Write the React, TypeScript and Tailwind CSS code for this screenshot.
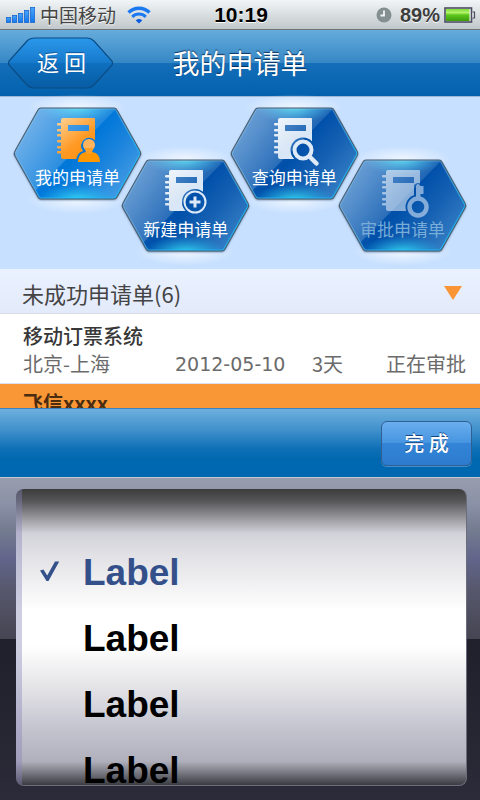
import { useState } from "react";
import type { ReactNode } from "react";

type HexTone = "bright" | "deep";

const HEX = "M29 1H101Q103 1 104 3L127 44Q128.500 46.500 127 49L104 90Q103 92 101 92H28Q26 92 25 90L2 49Q.5 46.500 2 44L25 3Q26 1 28 1Z";

function Notebook({ id, children }: { id: string; children?: ReactNode }) {
  return (
    <>
      <g fill={`url(#${id}-ink)`} mask={`url(#${id}-mask)`}>
        <path
          fillRule="evenodd"
          d="M50 11H81Q82 11 82 12V51Q82 52 81 52H50Q48 52 48 50V13Q48 11 50 11ZM55 18V24H76V18Z"
        />
        {[17, 23, 28, 34, 40, 45].map((y) => (
          <rect key={y} x="44" y={y - 1} width="6" height="2.400" rx="1" />
        ))}
      </g>
      {children}
    </>
  );
}

function HexButton({
  id,
  label,
  tone,
  low,
  faded,
  orange,
  cut,
  children,
}: {
  id: string;
  label: string;
  tone: HexTone;
  low?: boolean;
  faded?: boolean;
  orange?: boolean;
  cut: ReactNode;
  children: ReactNode;
}) {
  return (
    <button
      type="button"
      disabled={faded}
      className={`-mr-[21px] grid w-[129px] shrink-0 last:mr-0 ${low ? "mt-[52px]" : ""}`}
    >
      <svg
        viewBox="0 0 129 93"
        className="col-start-1 row-start-1 h-[93px] w-[129px] overflow-visible"
        aria-hidden="true"
      >
        <defs>
          <linearGradient id={`${id}-base`} x1="0" y1="0.2" x2="1" y2="0.8">
            <stop offset="0" stopColor={tone === "bright" ? "#2b8be0" : "#1f6fc0"} />
            <stop offset="0.5" stopColor={tone === "bright" ? "#0077d9" : "#0050aa"} />
            <stop offset="0.7" stopColor={tone === "bright" ? "#1a83dc" : "#1560b2"} />
            <stop offset="1" stopColor={tone === "bright" ? "#4a9fe6" : "#3a83c8"} />
          </linearGradient>
          <radialGradient id={`${id}-glow`}>
            <stop offset="0" stopColor="#38e6f5" stopOpacity="0.85" />
            <stop offset="1" stopColor="#20b8f0" stopOpacity="0" />
          </radialGradient>
          <radialGradient id={`${id}-halo`}>
            <stop offset="0" stopColor="#ffffff" stopOpacity="0.7" />
            <stop offset="1" stopColor="#ffffff" stopOpacity="0" />
          </radialGradient>
          <linearGradient id={`${id}-gloss`} x1="0" y1="0.3" x2="0.7" y2="0.7">
            <stop offset="0" stopColor="#ffffff" stopOpacity="0.36" />
            <stop offset="1" stopColor="#ffffff" stopOpacity="0.08" />
          </linearGradient>
          <linearGradient id={`${id}-edge`} x1="0" y1="0" x2="1" y2="1">
            <stop offset="0.4" stopColor="#8cc8f0" stopOpacity="0.4" />
            <stop offset="0.7" stopColor="#18c0ff" stopOpacity="0.8" />
          </linearGradient>
          <linearGradient id={`${id}-ink`} gradientUnits="userSpaceOnUse" x1="48" y1="11" x2="84" y2="56">
            <stop offset="0" stopColor={orange ? "#ffd091" : "#eef5fc"} />
            <stop offset="0.5" stopColor={orange ? "#ff9a26" : "#d9e6f5"} />
            <stop offset="1" stopColor={orange ? "#ff8a00" : "#dce9f8"} />
          </linearGradient>
          <clipPath id={`${id}-clip`}>
            <path d={HEX} />
          </clipPath>
          <mask id={`${id}-mask`} maskUnits="userSpaceOnUse" x="0" y="0" width="129" height="93">
            <rect width="129" height="93" fill="white" />
            {cut}
          </mask>
        </defs>
        <ellipse cx="64" cy="0" rx="50" ry="13" fill={`url(#${id}-halo)`} />
        <ellipse cx="64" cy="93" rx="50" ry="14" fill={`url(#${id}-halo)`} />
        <path d={HEX} fill={`url(#${id}-base)`} className="drop-shadow-[0_1px_1px_rgba(20,50,90,0.6)]" />
        <g clipPath={`url(#${id}-clip)`}>
          <ellipse cx="64" cy="0" rx="40" ry="16" fill={`url(#${id}-glow)`} />
          <ellipse cx="64" cy="93" rx="42" ry="16" fill={`url(#${id}-glow)`} />
          <path d="M0 0H105L20 86L0 60Z" fill={`url(#${id}-gloss)`} />
          <path d={HEX} fill="none" stroke={`url(#${id}-edge)`} strokeWidth="3.200" />
        </g>
        <path d={HEX} fill="none" stroke="#4a5f70" strokeWidth="1.100" />
        <g opacity={faded ? 0.62 : 1}>
          <Notebook id={id}>{children}</Notebook>
        </g>
      </svg>
      <span
        className={`z-10 col-start-1 row-start-1 self-end pb-[11px] text-center text-[17px] leading-6 ${
          faded ? "text-[#79add9]" : "text-white"
        }`}
      >
        {label}
      </span>
    </button>
  );
}

function StatusBar() {
  return (
    <div className="grid h-[30px] shrink-0 grid-cols-[1fr_auto_1fr] items-center border-b border-[#6d7478] bg-linear-to-b from-[#f1f5f7] to-[#c1c8cb] pr-1 pl-[6px]">
      <div className="flex items-center gap-[5px]">
        <svg viewBox="0 0 29 16" className="h-4 w-[29px]" aria-hidden="true">
          <defs>
            <linearGradient id="signal" x1="0" y1="0" x2="0" y2="1">
              <stop offset="0" stopColor="#4aa5f8" />
              <stop offset="1" stopColor="#1176ee" />
            </linearGradient>
          </defs>
          {[5, 7, 9, 12, 15].map((h, i) => (
            <rect
              key={h}
              x={i * 6 + 0.5}
              y={15.500 - h}
              width="4.200"
              height={h}
              fill="url(#signal)"
              stroke="#1766cf"
              strokeWidth="0.8"
            />
          ))}
        </svg>
        <span className="text-[19px] leading-7 text-[#444] [text-shadow:0_1px_0_#fff]">中国移动</span>
        <svg viewBox="0 0 24 18" className="ml-[6px] h-[18px] w-6" fill="none" stroke="#1a78f0" aria-hidden="true">
          <path d="M1.500 6.500A15 15 0 0 1 22.500 6.500" strokeWidth="3.400" />
          <path d="M5.200 10.800A9.800 9.800 0 0 1 18.800 10.800" strokeWidth="3" />
          <path d="M12 17.500L8.800 14.400A4.800 4.800 0 0 1 15.200 14.400Z" fill="#0a5be0" stroke="none" />
        </svg>
      </div>
      <span className="font-['Liberation_Sans',sans-serif] text-[21px] leading-7 font-bold text-black [text-shadow:0_1px_0_#fff]">
        10:19
      </span>
      <div className="flex items-center justify-end">
        <svg viewBox="0 0 16 16" className="h-4 w-4" aria-hidden="true">
          <circle cx="8" cy="8" r="7.500" fill="#858f91" />
          <path d="M8 3.500V8.500H4.500" fill="none" stroke="#f2f5f6" strokeWidth="1.800" />
        </svg>
        <span className="ml-2 font-['Liberation_Sans',sans-serif] text-[20px] leading-7 font-bold text-[#3d3d3d] [text-shadow:0_1px_0_#fff]">
          89%
        </span>
        <svg viewBox="0 0 32 16" className="ml-1 h-4 w-8" aria-hidden="true">
          <defs>
            <linearGradient id="charge" x1="0" y1="0" x2="0" y2="1">
              <stop offset="0" stopColor="#7fdc35" />
              <stop offset="0.3" stopColor="#b4f36c" />
              <stop offset="0.5" stopColor="#5cc71c" />
              <stop offset="1" stopColor="#3f9c0c" />
            </linearGradient>
          </defs>
          <rect x="1" y="1" width="26.500" height="14" fill="#f4f7f4" stroke="#4b4c60" strokeWidth="1.600" />
          <rect x="2" y="2" width="23.500" height="12" fill="url(#charge)" />
          <path d="M28.500 5H30.500V11H28.500" fill="#dfe3e6" stroke="#4b4c60" strokeWidth="1.200" />
        </svg>
      </div>
    </div>
  );
}

function Header() {
  return (
    <header className="grid h-[67px] shrink-0 grid-cols-[1fr_auto_1fr] items-center border-b border-[#9fb6d3] bg-[linear-gradient(#66acdc,#3587c5_50%,#156eb8_50%,#0261ae)] px-2 text-white">
      <button type="button" className="grid w-[105px] place-items-center">
        <svg viewBox="0 0 105 52" className="col-start-1 row-start-1 h-[52px] w-[105px]" aria-hidden="true">
          <defs>
            <linearGradient id="back" x1="0" y1="0" x2="0" y2="1">
              <stop offset="0" stopColor="#2b98eb" />
              <stop offset="0.5" stopColor="#1679cb" />
              <stop offset="0.5" stopColor="#0f70c0" />
              <stop offset="1" stopColor="#075ca3" />
            </linearGradient>
          </defs>
          <path
            d="M27 1H79Q83 1 86 4L104 24Q105 26 104 28L86 48Q83 51 79 51H27Q22 51 19 48L1 28Q0 26 1 24L19 4Q22 1 27 1Z"
            fill="url(#back)"
            stroke="#0c4c84"
            strokeWidth="1.200"
          />
        </svg>
        <span className="z-10 col-start-1 row-start-1 pb-1 pl-[2px] text-[22px] leading-8 [text-shadow:0_-1px_0_rgba(0,40,90,0.5)]">
          返 回
        </span>
      </button>
      <h1 className="text-[27px] leading-9 [text-shadow:0_-1px_1px_rgba(0,30,70,0.8)]">我的申请单</h1>
    </header>
  );
}

function Picker() {
  const [selected, setSelected] = useState(0);
  return (
    <section aria-label="选择" className="shrink-0">
      <div className="flex h-[69px] items-center justify-end border-t border-[#3b82bf] bg-[linear-gradient(#6db0de,#3a8cc9_35%,#0f70b7_58%,#0068b0_75%,#0068b0)] px-2">
        <button
          type="button"
          className="h-[45px] w-[91px] rounded-md border border-[#315f92] bg-[linear-gradient(#6aafee,#4593e0_50%,#3384d6_50%,#2c7bcf)] text-[20px] font-medium text-white shadow-[0_1px_0_rgba(110,170,220,0.6)] [text-shadow:0_-1px_0_rgba(0,30,80,0.7)]"
        >
          完 成
        </button>
      </div>
      <div className="border-t border-[#c3c8d2] bg-[linear-gradient(#989dae,#8b91a6_8%,#727a90_17%,#62658a_25%,#55566a_36%,#454552_50%,#1f202c_50%,#242430_70%,#2b2b39)] px-[13px] pt-[11px] pb-[14px] pl-4">
        <div className="h-[297px] overflow-hidden rounded-lg border-r border-b border-[#6b6c7c] bg-[linear-gradient(#3c3c3c,#555557_4%,#9a9a9f_10%,#d2d2da_15%,#e4e4e8_24%,#fff_41%,#fff_53%,#e6e6e9_66%,#c6c6d1_80%,#b0b0bd_92%,#85858e_95%,#3b3b42)]">
          <div className="h-full border-l-[6px] border-[#8585b8]/40 pt-[51px]">
            {["Label", "Label", "Label", "Label"].map((text, i) => (
              <label
                key={i}
                className={`flex h-[66px] items-center pl-[18px] font-['Liberation_Sans',sans-serif] text-[37px] font-bold ${
                  selected === i ? "text-[#34508a]" : "text-black"
                }`}
              >
                <input
                  type="radio"
                  name="picker"
                  checked={selected === i}
                  onChange={() => setSelected(i)}
                  className="sr-only"
                />
                <span className="w-[43px]">
                  {selected === i && (
                    <svg viewBox="0 0 20 20" className="mb-1 h-5 w-5" aria-hidden="true">
                      <path d="M0 9.500L3.500 8.500L7.200 14.500L15 0.500H19.200L8.500 20H6.500Z" fill="currentColor" />
                    </svg>
                  )}
                </span>
                {text}
              </label>
            ))}
          </div>
        </div>
      </div>
    </section>
  );
}

export default function App() {
  return (
    <div className="flex h-screen flex-col overflow-hidden bg-white font-['Noto_Sans_CJK_SC',sans-serif]">
      <StatusBar />
      <Header />
      <nav className="flex shrink-0 items-start justify-between bg-[#c7e0ff] px-[13px] pt-[10px] pb-[17px]">
        <HexButton
          id="mine"
          label="我的申请单"
          tone="bright"
          orange
          cut={<path d="M63 56Q63 46 70 44A8 8 0 1 1 82 44Q89 46 89 56Z" fill="black" />}
        >
          <circle cx="76" cy="38" r="6" fill="#ffb45c" />
          <path d="M65 55Q65 46 73 45Q76 48 79 45Q87 46 87 55Z" fill="#ff9800" />
          <path d="M72 41H80L79 46Q76 48 73 46Z" fill="#ff9f26" />
        </HexButton>
        <HexButton
          id="new"
          label="新建申请单"
          tone="deep"
          low
          cut={<circle cx="74" cy="43" r="13" fill="black" />}
        >
          <g fill="none" stroke="#dfeaf8">
            <circle cx="74" cy="43" r="10.500" strokeWidth="2" />
            <path d="M74 37.500V48.500M68.500 43H79.500" strokeWidth="3" />
          </g>
        </HexButton>
        <HexButton
          id="query"
          label="查询申请单"
          tone="deep"
          cut={<circle cx="73" cy="43" r="12.500" fill="black" />}
        >
          <g fill="none" stroke="#dfeaf8" strokeLinecap="round">
            <circle cx="73" cy="43" r="8.500" strokeWidth="4" />
            <path d="M80 50L86.500 56.500" strokeWidth="4.500" />
          </g>
        </HexButton>
        <HexButton
          id="approve"
          label="审批申请单"
          tone="deep"
          low
          faded
          cut={
            <>
              <circle cx="80" cy="48" r="12.500" fill="black" />
              <path d="M76 26Q80 22 84 26V40H76Z" fill="black" />
            </>
          }
        >
          <circle cx="80" cy="48" r="8.500" fill="none" stroke="#cfe0f4" strokeWidth="4.500" />
          <path d="M78 38V27Q80 23 82.500 27H85.500V35H82.500V38Z" fill="#cfe0f4" />
        </HexButton>
      </nav>
      <main className="min-h-0 flex-1 overflow-hidden">
        <button
          type="button"
          className="flex h-[45px] w-full items-center justify-between border-b border-[#d9dce2] bg-linear-to-b from-[#eaf1ff] to-[#e3ebfb] pr-[18px] pl-[22px] text-[#444]"
        >
          <span className="pt-1 font-['Noto_Sans_CJK_SC',sans-serif] text-[22px] leading-8">
            未成功申请单(6)
          </span>
          <svg viewBox="0 0 18 14" className="mt-1 h-[14px] w-[18px]" aria-hidden="true">
            <path d="M0 0H18L9 14Z" fill="#f99535" />
          </svg>
        </button>
        <article className="h-[70px] border-b border-[#d8dff0] bg-white pt-2 pr-[14px] pl-[23px]">
          <h2 className="text-[20px] leading-7 font-medium text-[#383838]">移动订票系统</h2>
          <div className="grid grid-cols-[152px_137px_1fr_auto] text-[20px] leading-7 text-[#6b6b6b]">
            <span>北京-上海</span>
            <span className="font-['DejaVu_Sans',sans-serif] text-[19px] leading-7">2012-05-10</span>
            <span>3天</span>
            <span>正在审批</span>
          </div>
        </article>
        <article className="h-[70px] bg-[#f99736] px-[23px] pt-[5px]">
          <h2 className="text-[20px] leading-7 font-bold text-[#4a2c10]">飞信xxxx</h2>
        </article>
      </main>
      <Picker />
    </div>
  );
}
